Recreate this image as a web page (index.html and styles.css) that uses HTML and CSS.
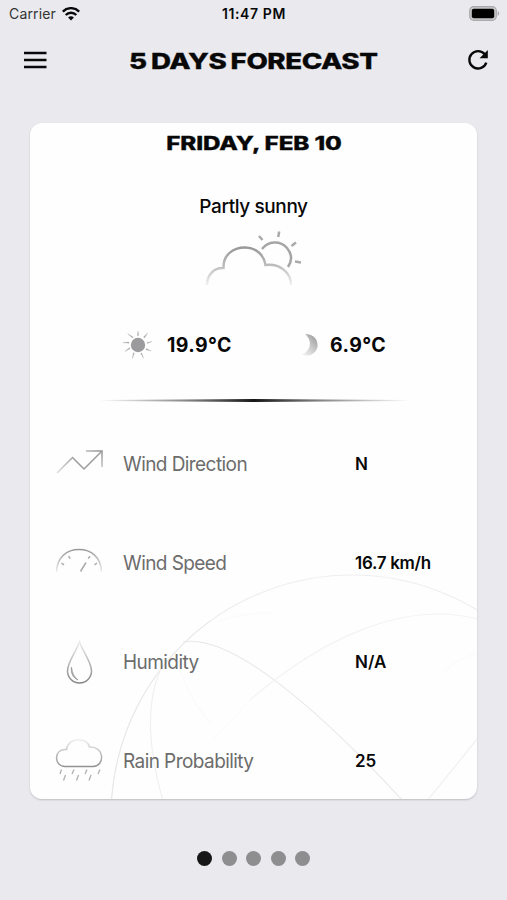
FILE: index.html
```html
<!DOCTYPE html>
<html lang="en">
<head>
<meta charset="utf-8">
<title>5 Days Forecast</title>
<link rel="stylesheet" href="styles.css">
</head>
<body>
<div class="status">
  <div class="carrier"><span>Carrier</span>
    <svg width="18" height="14" viewBox="0 0 18 14" fill="none" stroke="#080808" stroke-width="2.4"><path d="M.8 4.600a11.500 11.500 0 0 1 16.400 0M3.700 8a7.500 7.500 0 0 1 10.600 0"/><path d="M6.100 10.600a4.200 4.200 0 0 1 5.800 0L9 13.600z" fill="#080808" stroke="none"/></svg>
  </div>
  <time class="clock">11:47 PM</time>
  <svg class="battery" width="31" height="15" viewBox="0 0 31 15"><rect x=".7" y=".7" width="26.6" height="13.6" rx="4" fill="#c9c9cb" stroke="#a9a9ab" stroke-width="1.2"/><rect x="2.8" y="2.8" width="22.4" height="9.4" rx="2" fill="#000"/><path d="M28.7 5.3q1.5.4 1.5 2.2t-1.5 2.2z" fill="#a9a9ab"/></svg>
</div>
<header class="bar">
  <svg width="24" height="18" viewBox="0 0 24 18" stroke="#080808" stroke-width="2.400"><path d="M1 2h22.500M1 9h22.500M1 16h22.500"/></svg>
  <h1>5 DAYS FORECAST</h1>
  <svg width="22" height="22" viewBox="0 0 22 22" fill="none" stroke="#080808" stroke-width="2.400"><path d="M17.800 5.300A8.700 8.700 0 1 0 19.300 13.600"/><path d="M20.800 1v8.300h-8.200z" fill="#080808" stroke="none"/></svg>
</header>
<main class="card">
  <svg class="globe" width="447" height="676" viewBox="30 123 447 676" fill="none" stroke-width="1.1">
    <circle cx="352" cy="816" r="241" stroke="#eee"/>
    <path d="M111 816A241 241 0 0 1 210 621" stroke="#e4e4e4" stroke-width=".7"/>
    <path d="M183 642C232 633 322 713 403 801" stroke="#e8e8e8"/>
    <path d="M160 671C145 705 149 753 163 801M427 801L478 738" stroke="#efefef"/>
    <path d="M250 700C322 638 405 600 478 619" stroke="#f3f3f3"/>
    <path d="M180 670Q191 702 210 722M212 741L250 700M218 622Q241 612 275 613M444 672Q455 660 477 653" stroke="#fafafa"/>
  </svg>
  <h2>FRIDAY, FEB 10</h2>
  <p class="summary">Partly sunny</p>
  <svg class="weather" width="100" height="60" viewBox="203 229 100 60" fill="none" stroke-width="2.500">
    <defs>
      <linearGradient id="cloudFade" gradientUnits="userSpaceOnUse" x1="0" y1="244" x2="0" y2="287"><stop stop-color="#929292"/><stop offset=".5" stop-color="#bcbcbc"/><stop offset="1" stop-color="#f6f6f6"/></linearGradient>
    </defs>
    <path d="M207 285C207 275 214 267.500 223.500 268C223 255 233 247.500 245 247.500C256 247.500 264 255 265.500 265C279 263 291 272 291 285" stroke="url(#cloudFade)"/>
    <path d="M262 249C268 241 280 240 287 248C292 254 292 261 288 267" stroke="#a6a6a6"/>
    <path d="M259 236l3.500 4M279.200 231.500l-1 5.500M296 242.500l-4.500 3.500M295 261.600l6 .8" stroke="#aaa"/>
  </svg>
  <div class="temps">
    <div class="temp day">
      <svg width="32" height="30" viewBox="0 0 32 30"><circle cx="16" cy="15" r="7.200" fill="#9b9b9d"/><path d="M15.300 5.500L16 1l.7 4.500zM21.500 7L25.600 3 22.700 7.900zM25 12.400l5-.9-4.900 2zM24.300 18.600l4.700 2.300-5.100-1.200zM19.700 23l1.900 5.200-3-4.900zM12.400 23l-2 5.400.9-5.700zM8 18.700L2.800 21.500 7.500 17.600zM7 13.300L.6 12.600 7 12.100zM10.400 7.900L5.700 3.700 11.200 7z" fill="#aaa" stroke="#aaa" stroke-width=".3"/></svg>
      <b>19.9°C</b>
    </div>
    <div class="temp night">
      <svg width="20" height="26" viewBox="0 0 20 26"><defs><linearGradient id="moonFade" x1=".9" y1="0" x2=".1" y2="1"><stop stop-color="#989898"/><stop offset=".5" stop-color="#c9c9c9"/><stop offset="1" stop-color="#f5f5f5"/></linearGradient></defs><path d="M5 2C14 2 18 8 17.500 14C17 21 9 26 1.500 22.500C11 19 13 9 5 2z" fill="url(#moonFade)"/></svg>
      <b>6.9°C</b>
    </div>
  </div>
  <div class="rule"></div>
  <dl class="details">
    <div class="row">
      <svg width="50" height="50" viewBox="0 0 50 50" fill="none" stroke-width="1.500"><defs><linearGradient id="trend" gradientUnits="userSpaceOnUse" x1="2" y1="0" x2="20" y2="0"><stop stop-color="#ddd"/><stop offset="1" stop-color="#9b9b9b"/></linearGradient><linearGradient id="tip" gradientUnits="userSpaceOnUse" x1="32" y1="30" x2="47" y2="11"><stop stop-color="#eee"/><stop offset="1" stop-color="#8c8c8c"/></linearGradient></defs><path d="M2 34L17.500 18.500 29 30 46 13" stroke="url(#trend)"/><path d="M31 12H47V28" stroke="url(#tip)"/></svg>
      <dt>Wind Direction</dt><dd>N</dd>
    </div>
    <div class="row">
      <svg width="50" height="50" viewBox="0 0 50 50" fill="none" stroke="#aaa" stroke-width="1.500"><defs><linearGradient id="dial" x1="0" y1="0" x2="0" y2="1"><stop stop-color="#999"/><stop offset="1" stop-color="#eee"/></linearGradient></defs><path d="M1.500 34C2 19 12 11.500 24 11.500S46 19 46.500 34" stroke="url(#dial)"/><path d="M25.500 33.500L31 24.500M6.500 25l2.500 1.800M13.500 18.200l1.700 2.300M35 18.200l-1.800 2.300M42 25l-2.500 1.800"/></svg>
      <dt>Wind Speed</dt><dd class="speed">16.7 km/h</dd>
    </div>
    <div class="row">
      <svg width="50" height="50" viewBox="0 0 50 50" fill="none" stroke-width="1.500"><defs><linearGradient id="drop" x1="0" y1="0" x2="0" y2="1"><stop stop-color="#eee"/><stop offset="1" stop-color="#858585"/></linearGradient></defs><path d="M24.500 4.500C21.500 14.500 12.500 25 12.500 34A12 12 0 0 0 36.500 34C36.500 25 27.500 14.500 24.500 4.500z" stroke="url(#drop)"/><path d="M16.500 30C15.500 36 18 41 23 43C19 39.500 17 36 16.500 30z" fill="#aaa" stroke="#999" stroke-width=".8"/></svg>
      <dt>Humidity</dt><dd>N/A</dd>
    </div>
    <div class="row">
      <svg width="50" height="50" viewBox="0 0 50 50" fill="none" stroke-width="1.500"><defs><linearGradient id="rain" x1="0" y1="0" x2="0" y2="1"><stop stop-color="#eee"/><stop offset="1" stop-color="#929292"/></linearGradient></defs><path d="M10 30.500C-1.500 30.500-1.500 12 11.500 13.500C13 1 32.500 1 34.500 11C50 10 50 30.500 38 30.500z" stroke="url(#rain)"/><path d="M6.500 33.500l-1.500 4.500M19 33.500l-2 4.500M32 33.500l-2 4.500M45 33.500l-2 4.500M10.500 39l-2 5.500M23.500 39l-2 5.500M36 39l-2 5.500" stroke="#b0b0b0" stroke-width="1.300"/></svg>
      <dt>Rain Probability</dt><dd>25</dd>
    </div>
  </dl>
</main>
<nav class="dots"><i class="on"></i><i></i><i></i><i></i><i></i></nav>
</body>
</html>
```
FILE: styles.css
```css
* { box-sizing: border-box; }
body { margin: 0; height: 900px; display: flex; flex-direction: column; overflow: hidden; background: #eae9ee; color: #080808; font-family: Inter, "Liberation Sans", sans-serif; }
h1, h2, p, dl, dt, dd { margin: 0; white-space: nowrap; }
svg { display: block; flex: none; }
.status { flex: none; height: 27px; display: grid; grid-template-columns: 1fr auto 1fr; align-items: center; padding: 0 7px 0 9px; }
.carrier { display: flex; align-items: center; gap: 6px; font-size: 14px; letter-spacing: .15px; color: #333; }
.clock { font-size: 14px; font-weight: 600; letter-spacing: .6px; margin-right: 1px; }
.battery { justify-self: end; }
.bar { flex: none; height: 66px; display: grid; grid-template-columns: 24px 1fr 22px; justify-items: center; align-items: center; padding: 0 18px 0 23px; }
h1 { font-size: 21.500px; font-weight: 800; line-height: 28px; letter-spacing: -.35px; word-spacing: -1px; transform: scaleX(1.29); -webkit-text-stroke: .3px #080808; margin: 2px 7px 0 0; }
.card { position: relative; flex: none; width: 447px; height: 676px; margin: 30px 0 0 30px; border-radius: 12px; overflow: hidden; background: #fefefe; display: flex; flex-direction: column; align-items: center; box-shadow: 0 1px 2px #bdbdc1; }
.globe { position: absolute; top: 0; left: 0; }
.card > :not(.globe) { position: relative; flex: none; }
h2 { margin-top: 8px; font-size: 18.500px; line-height: 24px; font-weight: 800; letter-spacing: -.1px; transform: scaleX(1.31); -webkit-text-stroke: .3px #080808; }
.summary { margin-top: 39px; font-size: 19px; line-height: 26px; font-weight: 500; letter-spacing: -.4px; }
.weather { margin: 9px 2px 0 0; }
.temps { align-self: stretch; height: 34px; margin-top: 39px; padding-left: 92px; display: flex; align-items: center; }
.temp { display: flex; align-items: center; font-size: 19.500px; letter-spacing: .4px; }
.temp b { font-weight: 700; }
.day { width: 178px; gap: 13px; }
.night { gap: 10px; }
.rule { width: 310px; height: 3px; margin-top: 37px; background: linear-gradient(90deg, transparent, #888 28%, #161616 50%, #888 72%, transparent); clip-path: polygon(0 35%, 50% 0, 100% 35%, 100% 65%, 50% 100%, 0 65%); }
.details { align-self: stretch; margin-top: 12px; padding-left: 25px; }
.row { height: 99px; display: grid; grid-template-columns: 68px 232px 1fr; align-items: center; }
dt { font-size: 20px; color: #6c6c6c; letter-spacing: -.6px; transform: scaleX(.95); transform-origin: left; }
dd { font-size: 17px; font-weight: 600; }
.speed { letter-spacing: -.3px; }
.dots { display: flex; justify-content: center; gap: 9.500px; margin-top: 52px; }
.dots i { width: 15px; height: 15px; border-radius: 50%; background: #8e8e90; }
.dots .on { background: #171717; }
```
